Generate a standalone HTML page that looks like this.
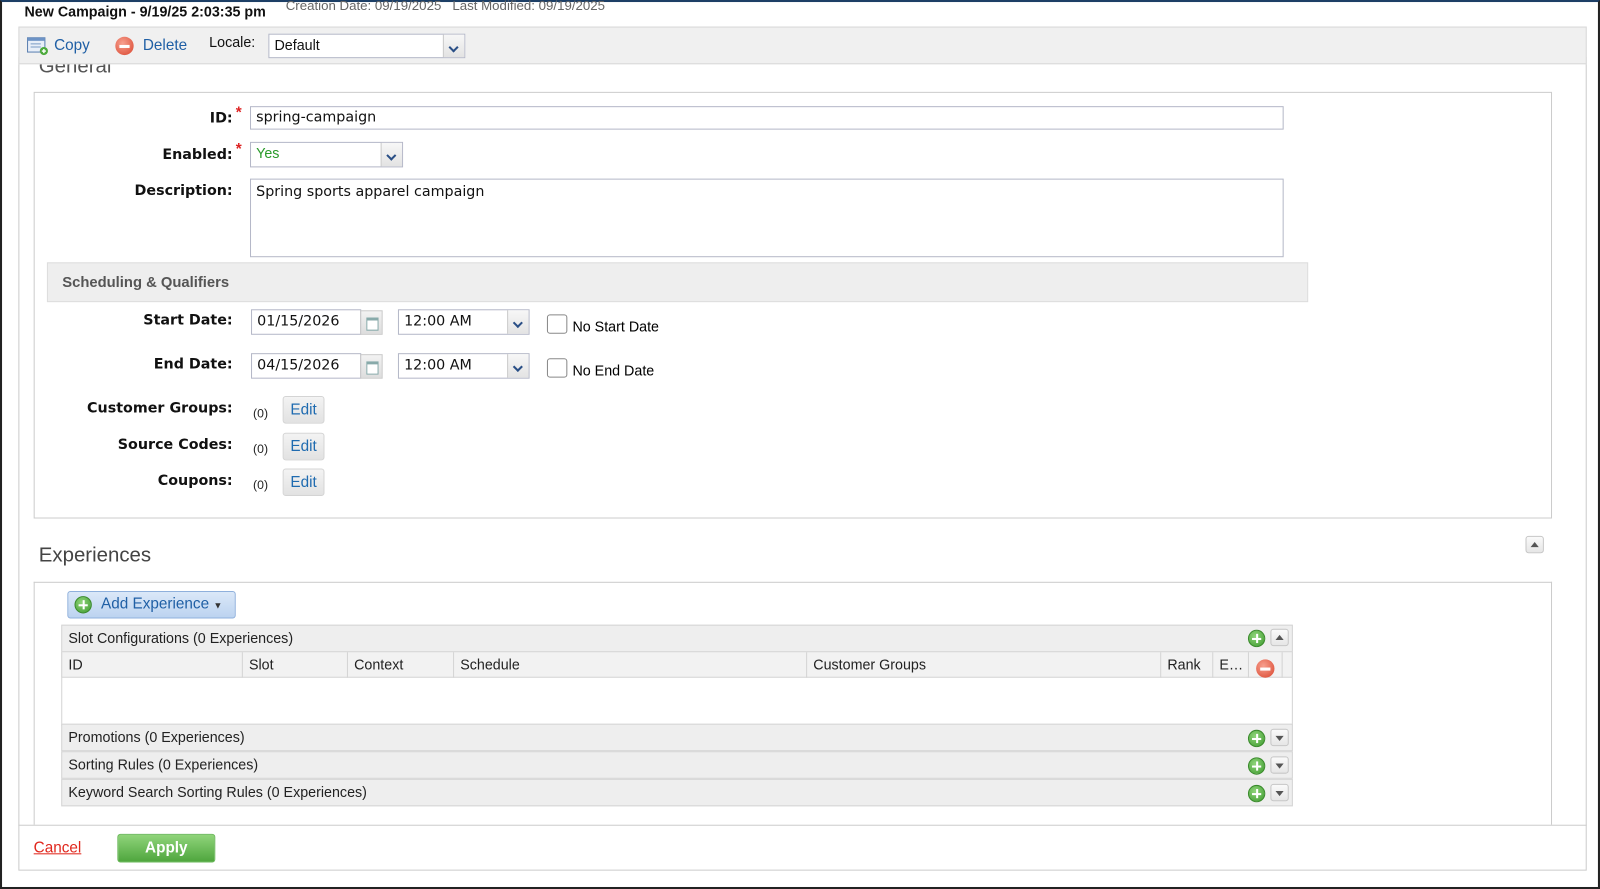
<!DOCTYPE html>
<html><head><meta charset="utf-8"><style>
*{box-sizing:border-box;margin:0;padding:0}
html,body{width:1600px;height:889px;overflow:hidden;background:#fff;font-family:"Liberation Sans",Arial,sans-serif}
#w{position:absolute;left:0;top:0;width:1568px;height:871px;transform:scale(1.0204,1.0207);transform-origin:0 0;border:2px solid #222;border-top:2px solid #1d3f66}
.a{position:absolute}
.lbl{position:absolute;font-weight:bold;font-size:14px;color:#111;text-align:right;width:220px;left:6px;font-family:"DejaVu Sans",sans-serif}
.inp{position:absolute;border:1px solid #b5b8c8;background:#fff;font-size:14px;padding:2px 5px;color:#111;font-family:"DejaVu Sans",sans-serif}
.sel{position:absolute;border:1px solid #b5b8c8;background:#fff;font-size:14px;color:#111}
.sel .arr{position:absolute;right:0;top:0;bottom:0;width:21px;background:linear-gradient(#f7f7f7,#e3e3e3);border-left:1px solid #c8c8c8}
.sel .arr:after{content:"";position:absolute;left:6px;top:9px;width:5px;height:5px;border-right:2px solid #2a4f86;border-bottom:2px solid #2a4f86;transform:rotate(45deg)}
.edit{position:absolute;width:41px;height:27px;border:1px solid #d4d4d4;border-radius:3px;background:linear-gradient(#f3f3f3,#e2e2e2);color:#1f6bb0;font-size:15px;text-align:center;line-height:25px}
.zero{position:absolute;left:246px;font-size:12px;color:#222}
.cb{position:absolute;width:20px;height:19px;border:1px solid #888;border-radius:3px;background:#fff}
.cal{position:absolute;width:22px;height:24px;background:linear-gradient(#f2f2f2,#ddd);border:1px solid #c8c8c8}
.cal:after{content:"";position:absolute;left:5px;top:6px;width:10px;height:9px;border:1px solid #8aa;background:#fff;border-top:3px solid #8aa}
.gp{position:absolute;width:17px;height:17px;border-radius:50%;background:radial-gradient(circle at 40% 35%,#8fd47a,#3d9a2e);border:1px solid #3a8a2c}
.gp:before{content:"";position:absolute;left:3px;top:6.5px;width:9px;height:2px;background:#fff}
.gp:after{content:"";position:absolute;left:6.5px;top:3px;width:2px;height:9px;background:#fff}
.tb{position:absolute;width:18px;height:17px;border:1px solid #c6c6c6;border-radius:3px;background:linear-gradient(#fafafa,#e6e6e6)}
.up:after{content:"";position:absolute;left:4px;top:5px;border:4px solid transparent;border-bottom:5px solid #555;border-top:0}
.dn:after{content:"";position:absolute;left:4px;top:6px;border:4px solid transparent;border-top:5px solid #555;border-bottom:0}
.row{position:absolute;left:60px;width:1207px;height:27px;background:#eee;border:1px solid #d4d4d4;font-size:14px;color:#222;padding-left:6px;line-height:25px}
.col{position:absolute;top:0;height:25px;border-left:1px solid #d4d4d4;padding-left:6px;line-height:25px}
</style></head><body><div id="w">
<div class="a" style="left:22px;top:0;font-size:14px;font-weight:bold;color:#111;line-height:18px">New Campaign - 9/19/25 2:03:35 pm</div>
<div class="a" style="left:278px;top:-5px;font-size:13px;color:#666;line-height:18px">Creation Date: 09/19/2025 &nbsp;&nbsp;Last Modified: 09/19/2025</div>

<div class="a" style="left:16px;top:54px;width:1537px;height:797px;border:1px solid #ccc;background:#fff"></div>
<div class="a" style="left:36px;top:52px;font-size:20px;color:#555">General</div>
<div class="a" style="left:16px;top:24px;width:1537px;height:37px;background:#f0f0f0;border:1px solid #d8d8d8"></div>
<svg class="a" style="left:24px;top:33px" width="22" height="20" viewBox="0 0 22 20"><rect x="1" y="2" width="17" height="14" fill="#e8eef8" stroke="#5a7fb0"/><rect x="1" y="2" width="17" height="3" fill="#6d93c6"/><line x1="4" y1="8" x2="14" y2="8" stroke="#7a9ac4"/><line x1="4" y1="11" x2="14" y2="11" stroke="#7a9ac4"/><circle cx="17" cy="15" r="4" fill="#4caa3c"/><path d="M15 15h4M17 13v4" stroke="#fff" stroke-width="1.4"/></svg>
<div class="a" style="left:51px;top:34px;font-size:15px;color:#1f5fa5">Copy</div>
<div class="a" style="left:111px;top:34px;width:18px;height:18px;border-radius:50%;background:radial-gradient(circle at 40% 35%,#f7a08f,#d9442c)"><div style="position:absolute;left:4px;top:8px;width:10px;height:2.5px;background:#fff"></div></div>
<div class="a" style="left:138px;top:34px;font-size:15px;color:#1f5fa5">Delete</div>
<div class="a" style="left:203px;top:31px;font-size:14px;color:#111">Locale:</div>
<div class="sel" style="left:261px;top:31px;width:193px;height:24px;padding:2px 5px">Default<div class="arr"></div></div>

<div class="a" style="left:31px;top:88px;width:1488px;height:418px;border:1px solid #ccc"></div>
<div class="lbl" style="top:106px">ID:</div><div class="a" style="left:229px;top:100px;color:#d22;font-size:15px;font-weight:bold">*</div>
<div class="inp" style="left:243px;top:102px;width:1013px;height:23px;padding-top:2px">spring-campaign</div>
<div class="lbl" style="top:142px">Enabled:</div><div class="a" style="left:229px;top:136px;color:#d22;font-size:15px;font-weight:bold">*</div>
<div class="sel" style="left:243px;top:137px;width:150px;height:25px;padding:2px 5px;color:#2a9a2a">Yes<div class="arr"></div></div>
<div class="lbl" style="top:177px">Description:</div>
<div class="inp" style="left:243px;top:173px;width:1013px;height:77px;padding-top:4px">Spring sports apparel campaign</div>

<div class="a" style="left:44px;top:255px;width:1236px;height:39px;background:#eee;border:1px solid #ddd;font-size:14.5px;font-weight:bold;color:#555;padding:11px 0 0 14px">Scheduling &amp; Qualifiers</div>
<div class="lbl" style="top:304px">Start Date:</div>
<div class="inp" style="left:244px;top:301px;width:108px;height:25px;padding-top:3px">01/15/2026</div><div class="cal" style="left:351px;top:302px"></div>
<div class="sel" style="left:388px;top:301px;width:129px;height:25px;padding:3px 5px;font-family:'DejaVu Sans',sans-serif">12:00 AM<div class="arr"></div></div>
<div class="cb" style="left:534px;top:306px"></div><div class="a" style="left:559px;top:310px;font-size:14px">No Start Date</div>
<div class="lbl" style="top:347px">End Date:</div>
<div class="inp" style="left:244px;top:344px;width:108px;height:25px;padding-top:3px">04/15/2026</div><div class="cal" style="left:351px;top:345px"></div>
<div class="sel" style="left:388px;top:344px;width:129px;height:25px;padding:3px 5px;font-family:'DejaVu Sans',sans-serif">12:00 AM<div class="arr"></div></div>
<div class="cb" style="left:534px;top:349px"></div><div class="a" style="left:559px;top:353px;font-size:14px">No End Date</div>
<div class="lbl" style="top:390px">Customer Groups:</div><div class="zero" style="top:396px">(0)</div><div class="edit" style="left:275px;top:386px">Edit</div>
<div class="lbl" style="top:426px">Source Codes:</div><div class="zero" style="top:431px">(0)</div><div class="edit" style="left:275px;top:422px">Edit</div>
<div class="lbl" style="top:461px">Coupons:</div><div class="zero" style="top:466px">(0)</div><div class="edit" style="left:275px;top:457px">Edit</div>

<div class="a" style="left:36px;top:531px;font-size:20px;color:#444">Experiences</div>
<div class="tb up" style="left:1493px;top:523px"></div>
<div class="a" style="left:31px;top:568px;width:1488px;height:238px;border:1px solid #ccc;border-bottom:none"></div>
<div class="a" style="left:64px;top:577px;width:165px;height:27px;border:1px solid #8fb0dc;border-radius:3px;background:linear-gradient(#dbe8f8,#bcd3f0);font-size:15px;color:#1f5fa5;padding:3px 0 0 32px">Add Experience <span style="font-size:9px;color:#333">▼</span></div>
<div class="gp" style="left:71px;top:582px"></div>

<div class="row" style="left:58px;top:610px">Slot Configurations (0 Experiences)</div>
<div class="gp" style="left:1221px;top:615px"></div><div class="tb up" style="left:1243px;top:614px"></div>
<div class="a" style="left:58px;top:636px;width:1207px;height:73px;border:1px solid #d4d4d4;border-top:none;background:#fff"></div>
<div class="a" style="left:58px;top:636px;width:1207px;height:26px;background:#f2f2f2;border:1px solid #d4d4d4;font-size:14px;color:#222">
<div class="col" style="left:0;border:none">ID</div><div class="col" style="left:176px">Slot</div><div class="col" style="left:279px">Context</div><div class="col" style="left:383px">Schedule</div><div class="col" style="left:729px">Customer Groups</div><div class="col" style="left:1076px">Rank</div><div class="col" style="left:1127px">E…</div><div class="col" style="left:1162px"></div><div class="col" style="left:1195px"></div>
</div>
<div class="a" style="left:1229px;top:644px;width:18px;height:18px;border-radius:50%;background:radial-gradient(circle at 40% 35%,#f7a08f,#d9442c)"><div style="position:absolute;left:4px;top:8px;width:10px;height:2.5px;background:#fff"></div></div>

<div class="row" style="left:58px;top:707px">Promotions (0 Experiences)</div>
<div class="gp" style="left:1221px;top:713px"></div><div class="tb dn" style="left:1243px;top:712px"></div>
<div class="row" style="left:58px;top:734px">Sorting Rules (0 Experiences)</div>
<div class="gp" style="left:1221px;top:740px"></div><div class="tb dn" style="left:1243px;top:739px"></div>
<div class="row" style="left:58px;top:761px">Keyword Search Sorting Rules (0 Experiences)</div>
<div class="gp" style="left:1221px;top:767px"></div><div class="tb dn" style="left:1243px;top:766px"></div>

<div class="a" style="left:16px;top:806px;width:1537px;height:1px;background:#ccc"></div>
<div class="a" style="left:31px;top:820px;font-size:15px;color:#e0261c;text-decoration:underline">Cancel</div>
<div class="a" style="left:113px;top:815px;width:96px;height:28px;border:1px solid #6ab85a;border-radius:3px;background:linear-gradient(#8fd47a,#4fa63e);color:#fff;font-weight:bold;font-size:15px;text-align:center;line-height:26px">Apply</div>
</div></body></html>
